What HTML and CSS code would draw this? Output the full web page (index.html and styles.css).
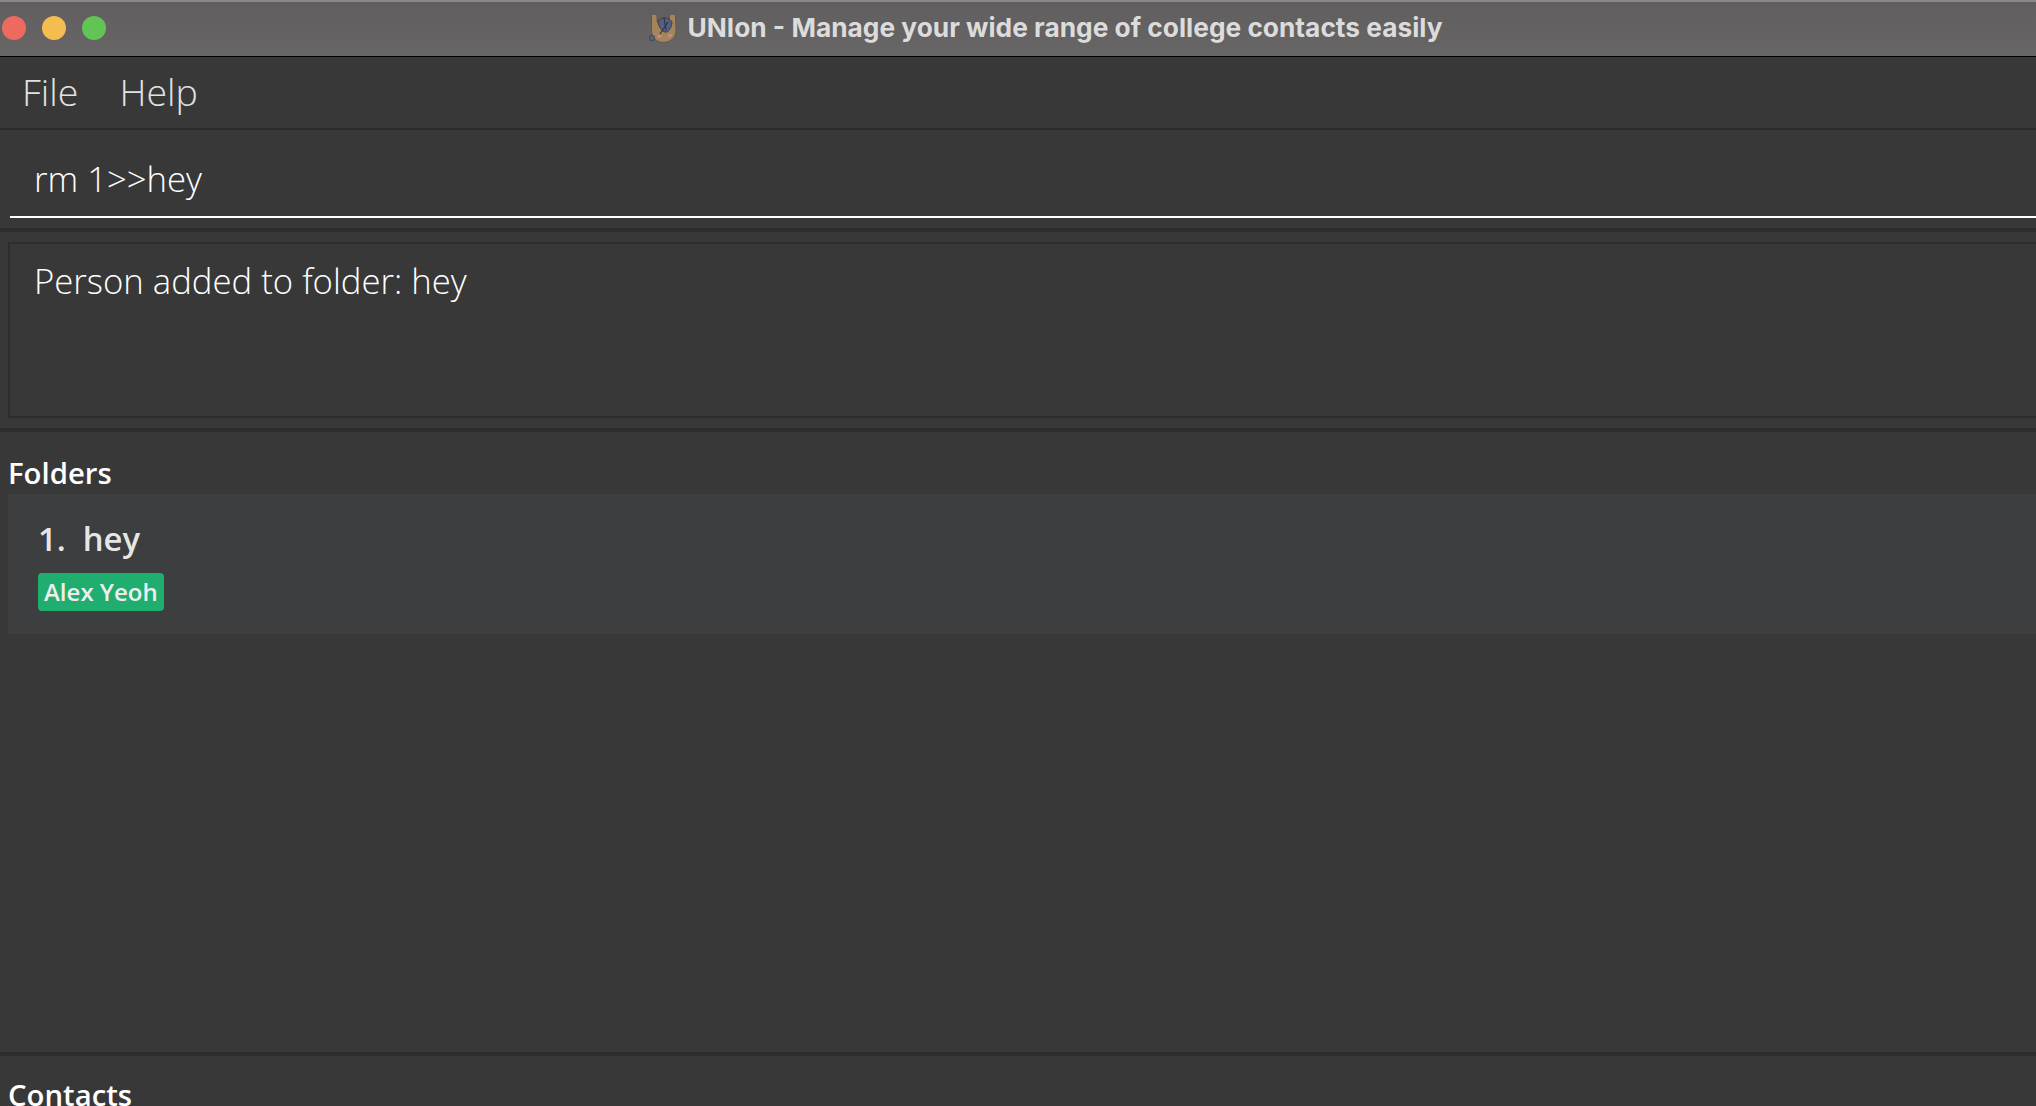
FILE: index.html
```html
<!DOCTYPE html>
<html lang="en">
<head>
<meta charset="utf-8">
<title>UNIon</title>
<link rel="stylesheet" href="styles.css">
</head>
<body>
<div class="app">
  <header class="titlebar">
    <div class="lights">
      <span class="light red"></span>
      <span class="light yellow"></span>
      <span class="light green"></span>
    </div>
    <div class="title">
      <svg class="logo" viewBox="0 0 28 30" width="28" height="30" aria-hidden="true">
        <path d="M2.500 3 C2.500 0.500 8 0.500 8 3 L8 9 C10 7 18 7 20 9 L20.500 3 C20.500 0.500 26.500 0.500 26.500 3 L27 17 C27 25 21 29.500 14 29.500 C8 29.500 3 25 2.500 18 Z" fill="#a5845a" stroke="#55504f" stroke-width="0.8"/>
        <path d="M9 9 C12 3 20 4 23 9 C23 13 21 17 18 19 C14 20 10 15 9 9 Z" fill="#565f7c" stroke="#3a4054" stroke-width="1"/>
        <path d="M11 21 L19 9 M15 5 L17 17" stroke="#2f3240" stroke-width="1.100" fill="none"/>
        <circle cx="3" cy="25" r="2.700" fill="#5c6075" stroke="#3c4254" stroke-width="0.800"/>
        <ellipse cx="10.500" cy="23.500" rx="2" ry="1.300" fill="#d08c8e"/>
        <ellipse cx="21" cy="22.500" rx="2" ry="1.300" fill="#d08c8e"/>
      </svg>
      <span class="title-text">UNIon - Manage your wide range of college contacts easily</span>
    </div>
  </header>
  <nav class="menubar">
    <span class="menu-item">File</span>
    <span class="menu-item">Help</span>
  </nav>
  <section class="command">
    <div class="command-field">rm 1&gt;&gt;hey</div>
  </section>
  <section class="result">
    <div class="result-box">Person added to folder: hey</div>
  </section>
  <section class="folders">
    <h2 class="panel-label">Folders</h2>
    <article class="folder-card">
      <div class="folder-name">1.&nbsp; hey</div>
      <div class="tags"><span class="tag">Alex Yeoh</span></div>
    </article>
  </section>
  <section class="contacts">
    <h2 class="panel-label contacts-label">Contacts</h2>
  </section>
</div>
</body>
</html>
```
FILE: styles.css
```css
* { box-sizing: border-box; }
html, body { margin: 0; height: 100%; overflow: hidden; }
body { background: #383838; font-family: "Open Sans", sans-serif; }
.app { display: flex; flex-direction: column; height: 1106px; }

.titlebar {
  height: 57px;
  flex: none;
  position: relative;
  display: flex;
  align-items: center;
  justify-content: center;
  background: linear-gradient(#605e5e, #676565);
  border-top: 2px solid #8a8a8a;
  border-bottom: 1px solid #000;
}
.lights { position: absolute; left: 2px; top: 14px; display: flex; gap: 16px; }
.light { width: 24px; height: 24px; border-radius: 50%; }
.red { background: #ee6a5f; }
.yellow { background: #f5bd4f; }
.green { background: #61c454; }
.title { display: flex; align-items: center; gap: 10px; margin-left: 56px; margin-top: -3px; }
.logo { display: block; margin-top: 1px; }
.title-text { font-family: Inter, sans-serif; font-weight: 700; font-size: 26.300px; color: #dcdcdc; }

.menubar {
  height: 73px;
  flex: none;
  display: flex;
  align-items: center;
  gap: 41px;
  padding: 0 0 2px 22px;
  background: #383838;
  border-bottom: 2px solid #2b2b2b;
}
.menu-item { font-weight: 300; font-size: 37.500px; color: #e2e2e2; }

.command { height: 102px; flex: none; padding-left: 10px; border-bottom: 4px solid #2d2d2d; }
.command-field {
  height: 88px;
  padding: 26px 0 0 24px;
  font-weight: 300;
  font-size: 34.700px;
  line-height: 46px;
  color: #fff;
  border-bottom: 2px solid #fff;
}

.result { height: 200px; flex: none; padding: 10px 0 10px 8px; border-bottom: 4px solid #2d2d2d; }
.result-box {
  height: 100%;
  padding: 14px 0 0 24px;
  font-weight: 300;
  font-size: 34.700px;
  line-height: 46px;
  color: #fff;
  border: 2px solid #2d2d2d;
  border-right: none;
}

.folders { height: 624px; flex: none; padding: 0 0 0 8px; border-bottom: 4px solid #2d2d2d; }
.panel-label { margin: 0; font-weight: 600; font-size: 29.300px; height: 62px; padding-top: 22px; line-height: 38px; color: #fff; }
.contacts-label { padding-top: 20px; }
.folder-card { height: 140px; padding: 23px 0 0 30px; background: #3c3e3f; }
.folder-name { font-weight: 600; font-size: 32.800px; line-height: 44px; color: #e6e6e6; }
.tags { display: flex; margin-top: 12px; }
.tag {
  height: 38px;
  padding: 0 6px;
  font-weight: 600;
  font-size: 24px;
  line-height: 38px;
  color: #eeeeee;
  background: #1fae70;
  border-radius: 4px;
}

.contacts { flex: 1; padding-left: 8px; overflow: hidden; }
```
